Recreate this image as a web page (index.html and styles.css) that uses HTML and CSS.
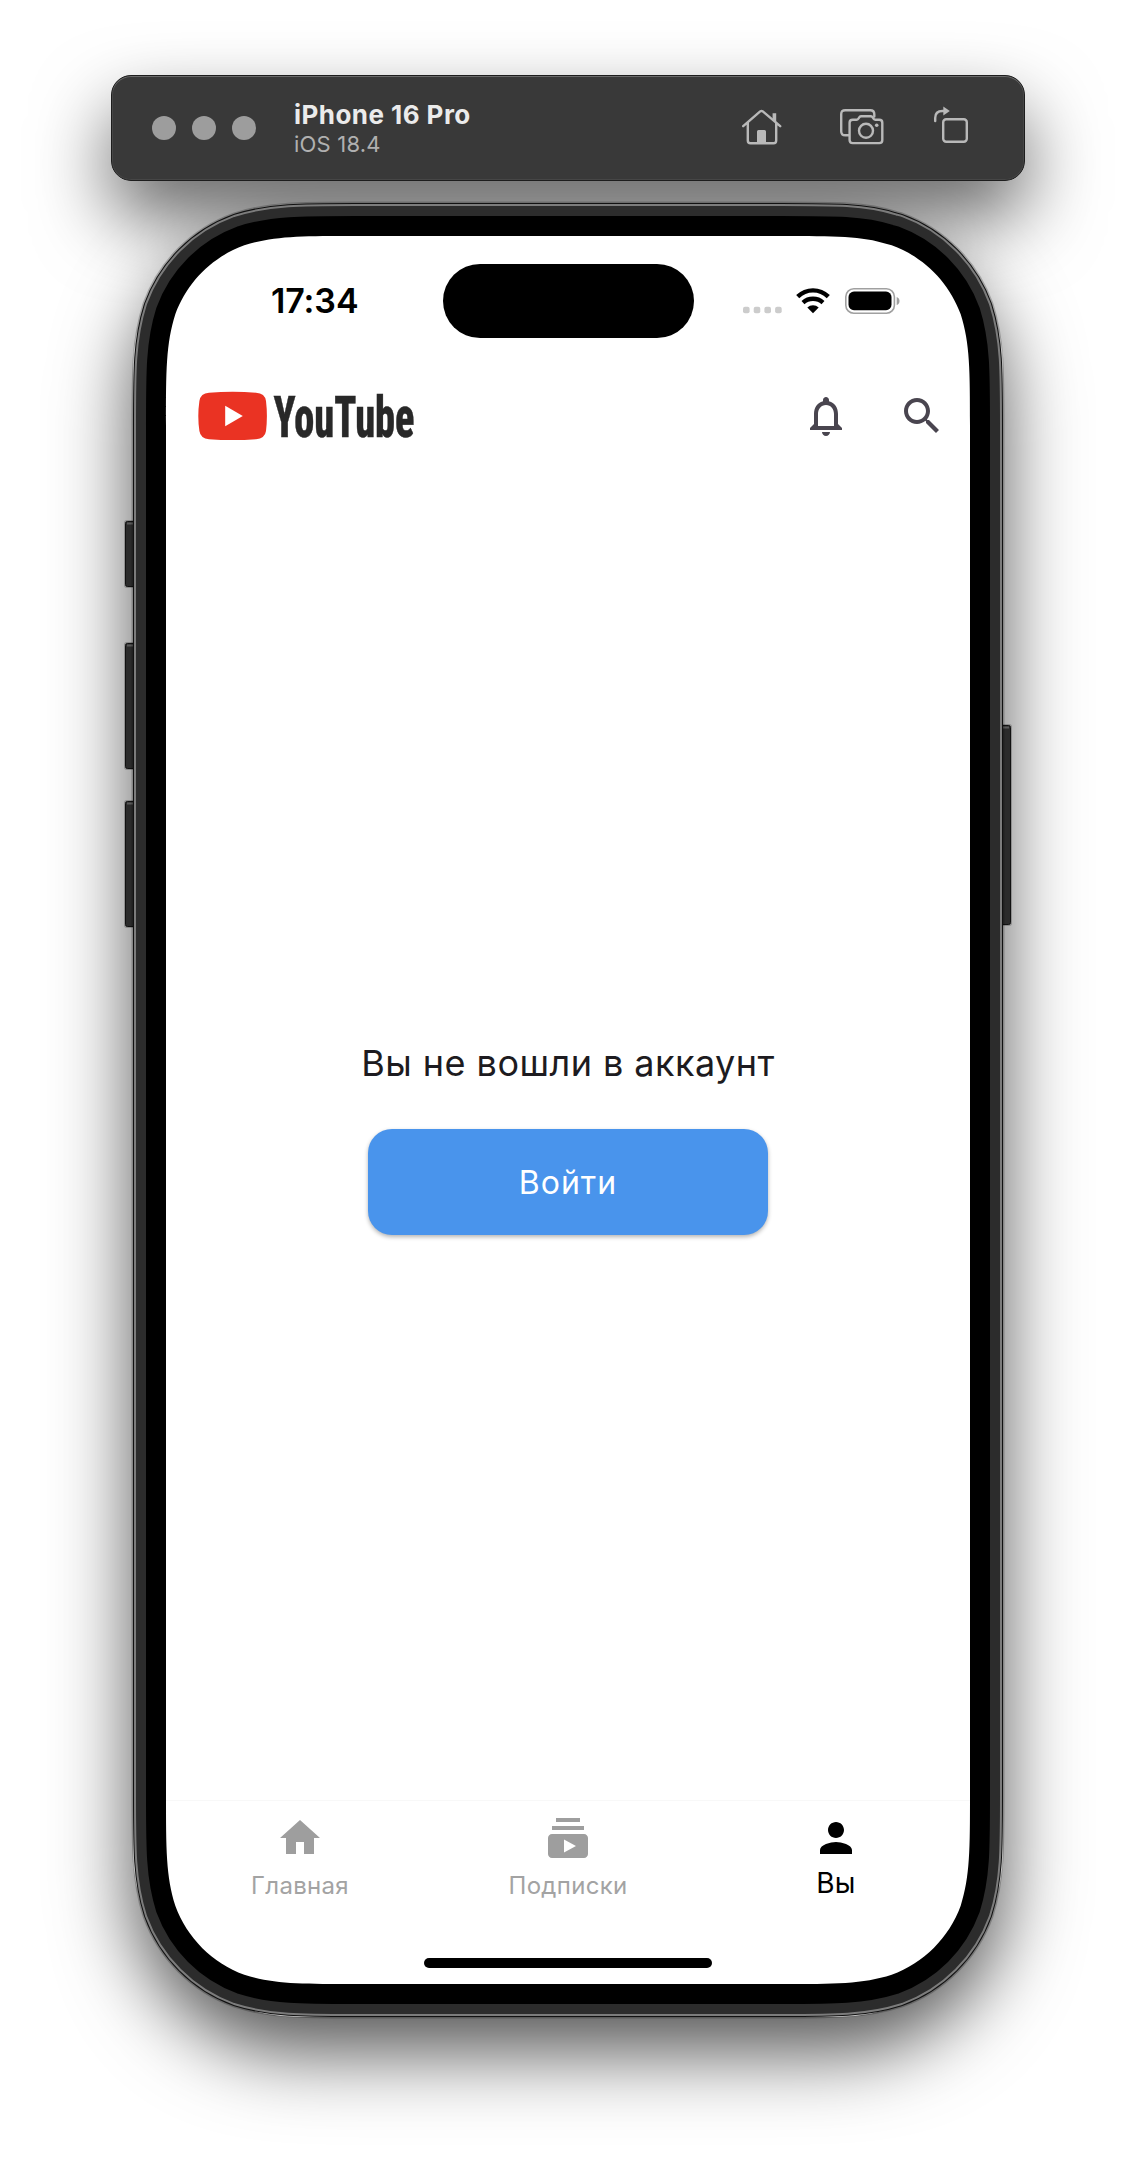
FILE: index.html
```html
<!DOCTYPE html>
<html lang="ru">
<head>
<meta charset="utf-8">
<title>iPhone 16 Pro</title>
<link rel="stylesheet" href="styles.css">
</head>
<body>
<div class="desktop">
  <header class="toolbar">
    <div class="lights"><i></i><i></i><i></i></div>
    <div class="device-name">
      <strong>iPhone 16 Pro</strong>
      <span>iOS 18.4</span>
    </div>
    <div class="tools">
      <svg class="tool-home" viewBox="0 0 40 36"><path d="M1.2 17.2 18.2 2.4Q19.5 1.4 20.8 2.4L38.2 17.2M5.8 14V31.5Q5.8 34.2 8.5 34.2H31.5Q34.2 34.2 34.2 31.5V14" /><path class="fill" d="M30.6 4.2h3.6v9l-3.6-3zM15 34V22.500q0-1.500 1.500-1.500h6q1.500 0 1.500 1.500V34z"/></svg>
      <svg class="tool-shot" viewBox="0 0 44 36"><path d="M8.500 26.300H5.200Q1.200 26.300 1.200 22.300V5.200Q1.200 1.200 5.200 1.200H30.300Q34.300 1.200 34.300 5.200V7.500"/><path d="M12.700 10.800H16.500Q17.600 10.800 18.200 9.900L19.500 8.100Q20.200 7.200 21.400 7.200H30.500Q31.700 7.200 32.400 8.100L33.700 9.900Q34.300 10.800 35.400 10.800H39.300Q42.300 10.800 42.300 13.800V31Q42.300 34.100 39.300 34.100H12.700Q9.600 34.100 9.600 31V13.800Q9.600 10.800 12.700 10.800Z"/><circle cx="26" cy="21.800" r="7"/><circle class="fill" cx="36.700" cy="16.200" r="1.800"/></svg>
      <svg class="tool-rotate" viewBox="0 0 34 38"><rect x="9.200" y="13.200" width="23.600" height="22.600" rx="3"/><path d="M1.200 15V12Q1.200 5 8.500 5H10"/><path class="fill" d="M9.300.5 15.800 5 9.300 9.500z"/></svg>
    </div>
  </header>

  <div class="phone">
    <svg class="frame" viewBox="-46 -46 896 1840">
      <defs>
        <path id="outline" d="M189.600 0H614.400C669 0 696.300 0 720.900 8.100L725.700 9.300C757.800 21 783 46.200 794.700 78.300C804 107.700 804 135 804 189.600V1558.400C804 1613 804 1640.300 794.700 1669.700C783 1701.800 757.800 1727 725.700 1738.700C696.300 1748 669 1748 614.400 1748H189.600C135 1748 107.700 1748 78.300 1738.700C46.200 1727 21 1701.800 9.300 1669.700C0 1640.300 0 1613 0 1558.400V189.600C0 135 0 107.700 9.300 78.300C21 46.200 46.200 21 78.300 9.300C107.700 0 135 0 189.600 0Z"/>
      </defs>
      <g class="halo">
        <rect x="-42" y="284" width="12" height="68" rx="3"/><rect x="-42" y="406" width="12" height="128" rx="3"/><rect x="-42" y="564" width="12" height="128" rx="3"/><rect x="834" y="488" width="12" height="202" rx="3"/>
      </g>
      <g class="keys">
        <rect x="-40.500" y="285.500" width="12" height="65" rx="2"/><rect x="-40.500" y="407.500" width="12" height="125" rx="2"/><rect x="-40.500" y="565.500" width="12" height="125" rx="2"/><rect x="832.500" y="489.500" width="12" height="199" rx="2"/>
      </g>
      <path class="key-light" d="M-39 287.500h8M-39 409.500h8M-39 567.500h8M836 491.500h7"/>
      <use href="#outline" class="ring ring-halo"/>
      <use href="#outline" class="ring ring-edge"/>
      <use href="#outline" class="ring ring-shine"/>
      <use href="#outline" class="ring ring-metal"/>
      <use href="#outline" class="ring ring-bezel"/>
      <use href="#outline" class="glass"/>
    </svg>

    <div class="screen">
      <div class="status">
        <time>17:34</time>
        <div class="island"></div>
        <div class="indicators">
          <svg class="signal" viewBox="0 0 39 26"><g fill="#ccc"><rect x="0" y="18.700" width="6.600" height="6.600" rx="2"/><rect x="10.700" y="18.700" width="6.600" height="6.600" rx="2"/><rect x="21.400" y="18.700" width="6.600" height="6.600" rx="2"/><rect x="32.100" y="18.700" width="6.600" height="6.600" rx="2"/></g></svg>
          <svg class="wifi" viewBox="0 0 34 26"><path d="M1.700 8.700Q8.200 2.400 17 2.400T32.300 8.700M7 14.600Q11.200 10.800 17 10.800T27 14.600" fill="none" stroke="#000" stroke-width="4.400"/><path d="M17 25.200 11.300 19.500Q13.700 17.300 17 17.300T22.700 19.500Z"/></svg>
          <svg class="battery" viewBox="0 0 56 26"><rect x=".8" y=".8" width="48.600" height="24.400" rx="8" fill="none" stroke="#a0a0a0" stroke-width="1.600"/><rect x="3.500" y="3.600" width="43" height="18.600" rx="5.500"/><path d="M51.700 9Q54.500 10 54.500 13T51.700 17Z" fill="#a0a0a0"/></svg>
        </div>
      </div>

      <div class="appbar">
        <svg class="logo" viewBox="0 0 218 50">
          <path fill="#ea3323" d="M11 1.700Q35 0 58 1.700Q67 2.300 68 10Q69.800 25 68 40Q67 47.500 58 48.200Q35 50 11 48.200Q2.500 47.500 1.400 40Q-.8 25 1.400 10Q2.500 2.300 11 1.700Z"/>
          <path fill="#fff" d="M27.200 14.800V35.200L44.800 25Z"/>
          <text x="75.500" y="45.700" textLength="141" lengthAdjust="spacingAndGlyphs">YouTube</text>
        </svg>
        <div class="actions">
          <svg viewBox="0 0 24 24"><path d="M12 22c1.100 0 2-.9 2-2h-4c0 1.100.9 2 2 2zm6-6v-5c0-3.070-1.630-5.640-4.500-6.320V4c0-.83-.67-1.500-1.500-1.500s-1.500.67-1.500 1.500v.68C7.640 5.360 6 7.920 6 11v5l-2 2v1h16v-1l-2-2zm-2 1H8v-6c0-2.480 1.510-4.500 4-4.500s4 2.020 4 4.500v6z"/></svg>
          <svg viewBox="0 0 24 24"><path d="M15.500 14h-.79l-.28-.27C15.410 12.590 16 11.110 16 9.500 16 5.910 13.090 3 9.500 3S3 5.910 3 9.500 5.910 16 9.500 16c1.610 0 3.090-.59 4.230-1.570l.27.28v.79l5 4.990L20.490 19l-4.990-5zm-6 0C7.010 14 5 11.990 5 9.500S7.010 5 9.500 5 14 7.010 14 9.500 11.990 14 9.500 14z"/></svg>
        </div>
      </div>

      <main class="content">
        <p>Вы не вошли в аккаунт</p>
        <button type="button">Войти</button>
      </main>

      <nav class="tabs">
        <a class="tab"><svg viewBox="0 0 24 24"><path d="M10 20v-6h4v6h5v-8h3L12 3 2 12h3v8z"/></svg><span>Главная</span></a>
        <a class="tab"><svg viewBox="0 0 24 24"><path d="M20 8H4V6h16v2zm-2-6H6v2h12V2zm4 10v8c0 1.100-.9 2-2 2H4c-1.100 0-2-.9-2-2v-8c0-1.100.9-2 2-2h16c1.100 0 2 .9 2 2zm-6 4l-6-3.270v6.530L16 16z"/></svg><span>Подписки</span></a>
        <a class="tab active"><svg viewBox="0 0 24 24"><path d="M12 12c2.210 0 4-1.790 4-4s-1.790-4-4-4-4 1.790-4 4 1.790 4 4 4zm0 2c-2.670 0-8 1.340-8 4v2h16v-2c0-2.660-5.330-4-8-4z"/></svg><span>Вы</span></a>
      </nav>
      <div class="home-bar"></div>
    </div>
  </div>
</div>
</body>
</html>
```
FILE: styles.css
```css
* { box-sizing: border-box; }
body { margin: 0; background: #fff; font-family: Inter, "Liberation Sans", sans-serif; }
svg { display: block; flex: none; }

.desktop {
  position: relative;
  z-index: 0;
  height: 2168px;
  padding-top: 75px;
  display: flex;
  flex-direction: column;
  align-items: center;
  gap: 55px;
  overflow: hidden;
}

/* simulator toolbar */
.toolbar {
  position: relative;
  width: 914px;
  height: 106px;
  padding: 0 56px 0 41px;
  display: flex;
  align-items: center;
  border-radius: 20px;
  border: 1px solid #1d1d1d;
  background: #393939;
  box-shadow: inset 0 1px 0 #6a6a6a, inset 0 0 0 1px #464646;
}
.toolbar::before {
  content: "";
  position: absolute;
  inset: -1px;
  z-index: -1;
  border-radius: 20px;
  box-shadow: 0 36px 76px rgba(0, 0, 0, .6);
}
.lights { display: flex; gap: 16px; margin-left: -1px; }
.lights i { width: 24px; height: 24px; border-radius: 50%; background: #9d9d9d; }
.device-name { margin-left: 38px; display: flex; flex-direction: column; }
.device-name strong { font-size: 26px; line-height: 32px; font-weight: 700; letter-spacing: .45px; color: #ebebeb; }
.device-name span { font-size: 22px; line-height: 26px; letter-spacing: .2px; color: #b0b0b0; }
.tools { margin-left: auto; margin-top: -3px; display: flex; align-items: center; fill: none; stroke: #b9b9b9; stroke-width: 2.400; stroke-linecap: round; stroke-linejoin: round; }
.tools .fill { fill: #b9b9b9; stroke: none; }
.tool-home { width: 40px; height: 36px; }
.tool-shot { width: 44px; height: 36px; margin-left: 58px; }
.tool-rotate { width: 34px; height: 38px; margin-left: 50px; margin-top: -4px; }

/* device */
.phone { position: relative; width: 804px; height: 1748px; }
.phone::before {
  content: "";
  position: absolute;
  inset: -33px;
  z-index: -1;
  border-radius: 165px;
  box-shadow: 0 35px 78px rgba(0, 0, 0, .67);
}
.frame { position: absolute; left: -46px; top: -46px; width: 896px; height: 1840px; }
.ring { fill: none; }
.ring-halo { stroke: rgba(0, 0, 0, .22); stroke-width: 69px; }
.ring-edge { stroke: #111; stroke-width: 66px; }
.ring-shine { stroke: #7c7c7c; stroke-width: 64px; }
.ring-metal { stroke: #2c2c2c; stroke-width: 60px; }
.ring-bezel { stroke: #000; stroke-width: 40px; }
.glass { fill: #fff; }
.halo { fill: rgba(0, 0, 0, .22); }
.keys { fill: #2b2b2b; stroke: #111; stroke-width: 1px; }
.key-light { stroke: #5a5a5a; stroke-width: 2px; }

.screen { position: relative; height: 100%; display: flex; flex-direction: column; }
.status { height: 124px; padding: 28px 69px 0 105px; display: flex; align-items: flex-start; }
.status time { width: 172px; font-size: 34px; line-height: 74px; font-weight: 600; letter-spacing: -.1px; }
.island { width: 251px; height: 74px; border-radius: 37px; background: #000; }
.indicators { margin-left: auto; padding-top: 24px; display: flex; }
.signal { width: 39px; height: 26px; }
.wifi { width: 34px; height: 26px; margin-left: 14px; }
.battery { width: 56px; height: 26px; margin-left: 15px; }

.appbar { height: 112px; padding: 0 24px 0 32px; display: flex; align-items: center; justify-content: space-between; }
.logo { width: 218px; height: 50px; overflow: visible; }
.logo text { font-family: Roboto, sans-serif; font-stretch: 75%; font-weight: 800; font-size: 58px; fill: #282828; stroke: #282828; stroke-width: .5px; }
.actions { display: flex; gap: 48px; fill: #49454f; }
.actions svg, .tab svg { width: 48px; height: 48px; }

.content { flex: 1; display: flex; flex-direction: column; align-items: center; justify-content: center; gap: 41px; }
.content p { margin: 0; padding-top: 1px; font-size: 36px; line-height: 50px; letter-spacing: .45px; color: #1d1b20; }
.content button {
  width: 400px;
  height: 106px;
  border: 0;
  border-radius: 24px;
  background: #4994ec;
  color: #fff;
  font: 400 32px Inter, sans-serif;
  letter-spacing: 1px;
  box-shadow: 0 2px 4px rgba(0, 0, 0, .3);
}

.tabs { height: 184px; padding-top: 13px; display: grid; grid-template-columns: repeat(3, 1fr); border-top: 1px solid #f8f8f8; }
.tab { display: flex; flex-direction: column; align-items: center; fill: #9e9e9e; color: #a3a3a3; font-size: 24px; line-height: 30px; letter-spacing: .3px; }
.tab span { margin-top: 9px; }
.tab.active { fill: #000; color: #000; font-size: 28px; }
.tab.active span { margin-top: 6px; }
.home-bar { position: absolute; left: 258px; bottom: 16px; width: 288px; height: 10px; border-radius: 5px; background: #000; }
```
